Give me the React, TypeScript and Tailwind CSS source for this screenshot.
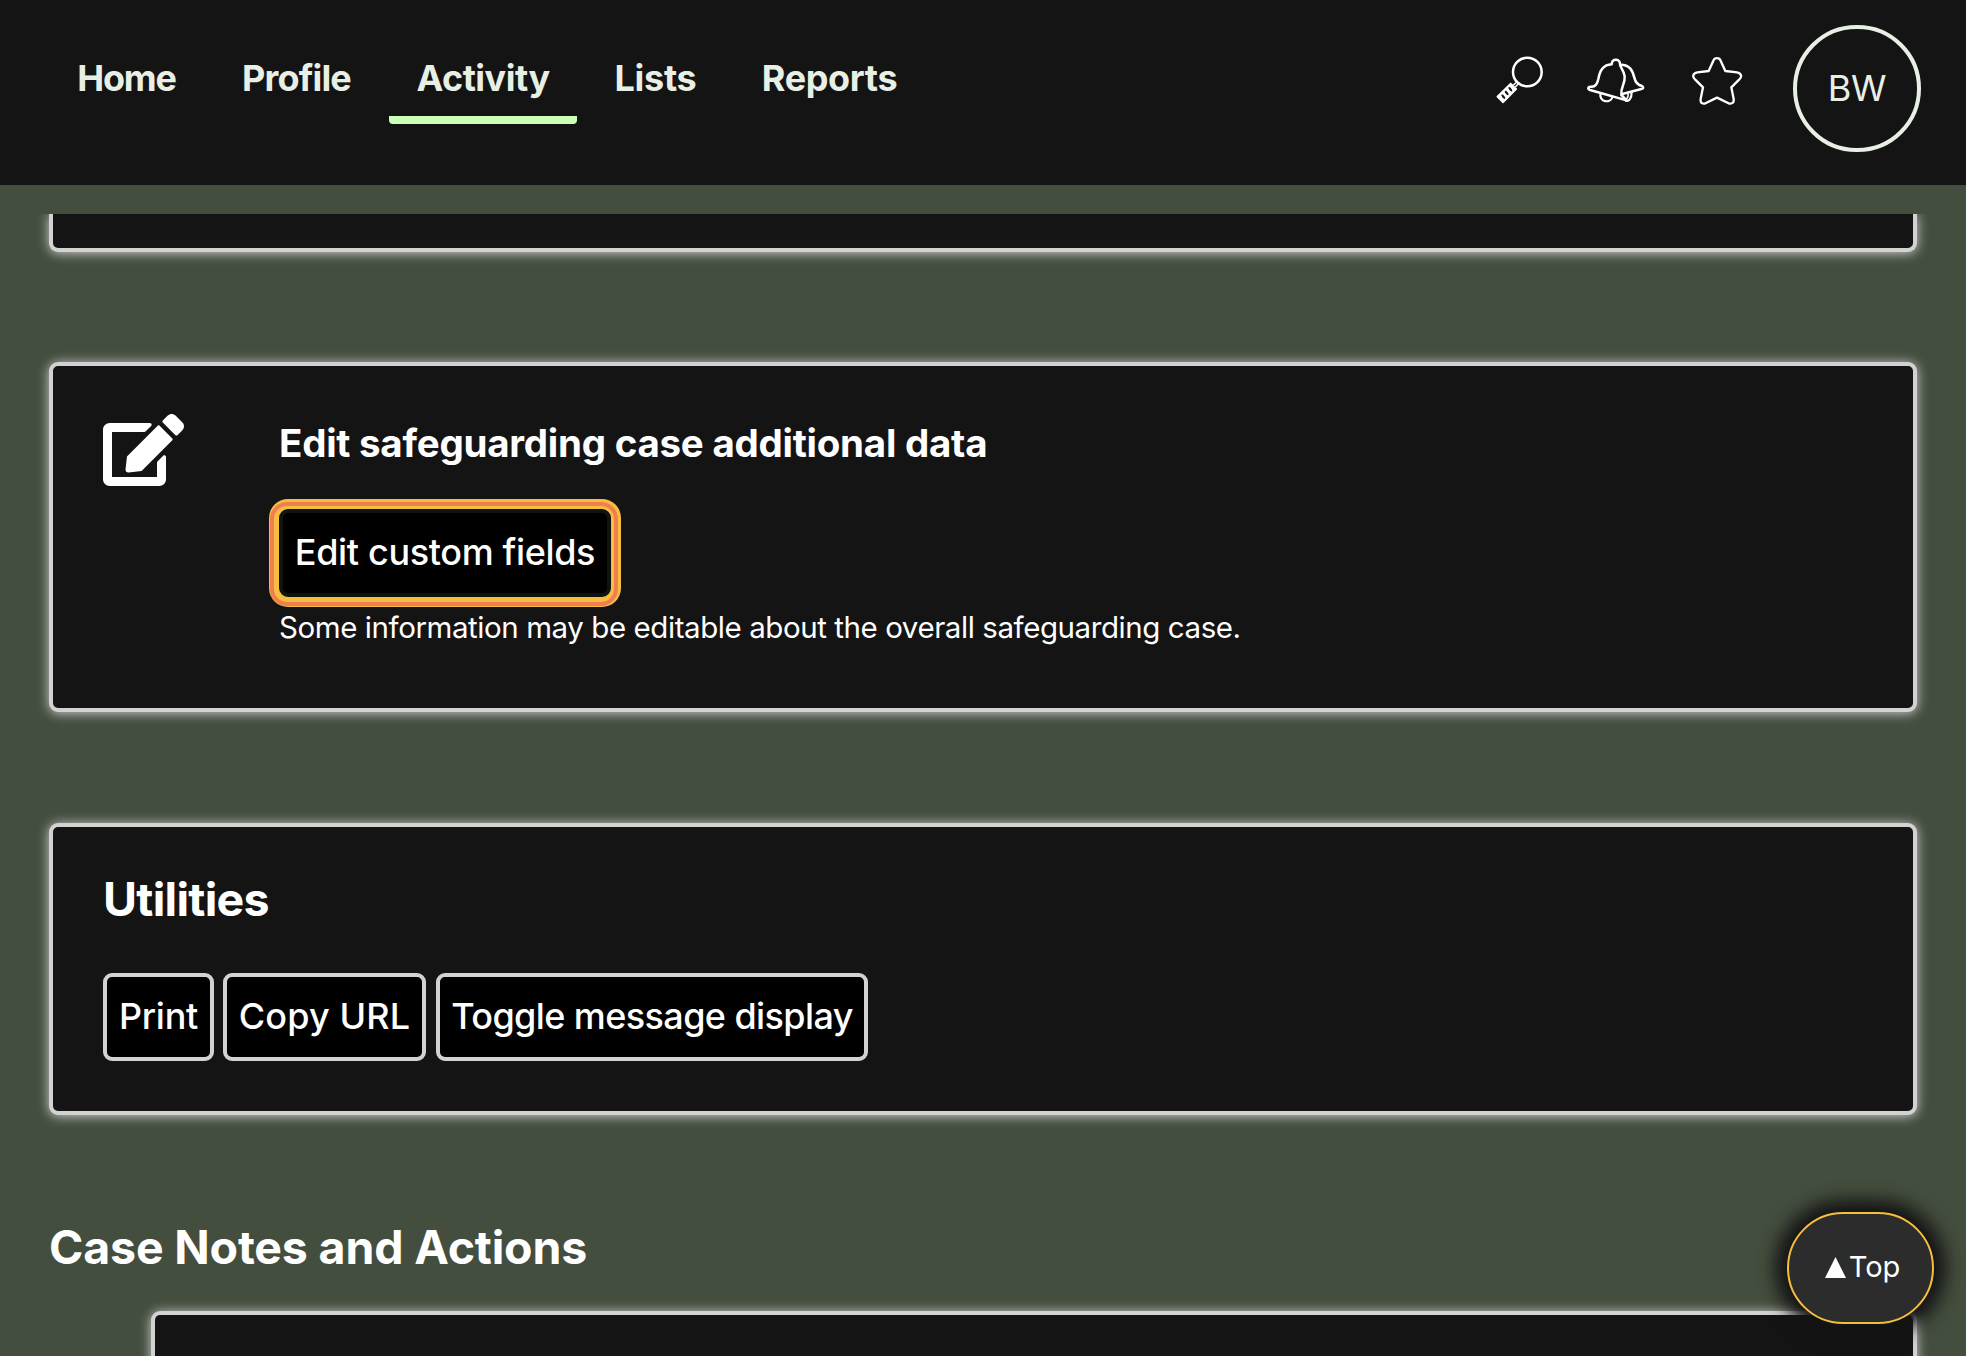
import { FaEdit } from "react-icons/fa";

const cardShadow = "shadow-[0_1px_12px_#d2d2d2]";

function SearchIcon() {
  return (
    <svg className="h-[48px] w-[48px] overflow-visible" viewBox="0 0 144 144" fill="none" stroke="#fff" strokeWidth="7.5">
      <circle cx="94" cy="48" r="43" />
      <path d="M62 78 52 88M67 83 58 93" strokeWidth="4.5" />
      <path d="M44 83 61 99 21 139 4 122Z" fill="#fff" strokeLinejoin="round" strokeWidth="5" />
      <g fill="#141414" stroke="none">
        <ellipse cx="22" cy="122" rx="8" ry="3.5" transform="rotate(50 22 122)" />
        <ellipse cx="32" cy="111" rx="8" ry="3.5" transform="rotate(50 32 111)" />
        <ellipse cx="43" cy="100" rx="8" ry="3.5" transform="rotate(50 43 100)" />
      </g>
    </svg>
  );
}

function BellsIcon() {
  return (
    <svg className="h-[48px] w-[60px] overflow-visible" viewBox="0 0 180 144" fill="none" stroke="#fff" strokeWidth="7.5" strokeLinejoin="round" strokeLinecap="round">
      <path d="M77 22C78 4 102 4 102 22C102 30 113 38 116 58C118 82 103 90 106 114L122 130L12 99C4 96 6 89 13 89C24 91 33 85 37 66C42 37 53 24 77 22Z" />
      <path d="M104 23C132 23 140 42 145 62C149 79 157 85 168 87C174 91 172 95 166 96L109 111" />
      <path d="M43 110C41 138 73 138 79 121M137 106C137 124 129 134 119 131" strokeWidth="6.5" />
      <path d="M126 109C128 119 124 124 119 127" strokeWidth="5" />
    </svg>
  );
}

function StarIcon() {
  return (
    <svg className="h-[50px] w-[52px]" viewBox="0 0 156 150" fill="none" stroke="#fff" strokeWidth="7" strokeLinejoin="round">
      <path d="M64 14C68 4 82 4 86 14L100 45L135 49C148 51 151 63 142 70L118 94L125 129C127 141 117 146 108 141L75 125L42 141C33 146 24 141 26 129L33 94L9 70C0 63 3 51 16 49L50 45Z" />
    </svg>
  );
}

function NavItem({ label, className, active }: { label: string; className: string; active?: boolean }) {
  return (
    <a
      className={`flex h-[66px] justify-center rounded-b-[4px] border-b-8 text-[36px] leading-[40px] font-bold whitespace-nowrap ${
        active ? "border-[#ccffb8]" : "border-transparent"
      } ${className}`}
    >
      {label}
    </a>
  );
}

function Button({ label, className }: { label: string; className: string }) {
  return (
    <button
      className={`flex h-[88px] items-center justify-center rounded-[9px] border-4 border-[#d2d2d2] bg-black pb-[2px] text-[36px] leading-[40px] font-medium whitespace-nowrap ${className}`}
    >
      {label}
    </button>
  );
}

export default function App() {
  return (
    <div className="relative flex h-[1356px] w-[1966px] flex-col overflow-hidden bg-[#444e3e] font-['Inter',sans-serif] text-white">
      <header className="flex h-[185px] shrink-0 justify-between bg-[#141414] pr-[45px] pl-[49px] text-[#e8efe4]">
        <nav className="flex gap-[11px] pt-[58px]">
          <NavItem label="Home" className="w-[157px] pr-[2px] tracking-[-1.2px]" />
          <NavItem label="Profile" className="w-[161px] pr-[2px] tracking-[-0.85px]" />
          <NavItem label="Activity" className="w-[188px] tracking-[-0.5px]" active />
          <NavItem label="Lists" className="w-[133px] pl-[2px] tracking-[-0.3px]" />
          <NavItem label="Reports" className="w-[195px] tracking-[-0.35px]" />
        </nav>
        <div className="flex">
          <div className="mt-[56px] mr-[42px]"><SearchIcon /></div>
          <div className="mt-[57px] mr-[46px]"><BellsIcon /></div>
          <div className="mt-[56px] mr-[49px]"><StarIcon /></div>
          <div className="mt-[25px] flex h-[127px] w-[128px] items-center justify-center rounded-full border-4 border-[#e8efe4] pb-[2px] text-[36px] tracking-[-0.3px]">
            BW
          </div>
        </div>
      </header>

      <main className="mt-[29px] flex flex-1 flex-col overflow-hidden pr-[49px] pl-[49px]">
        <section className={`h-[38px] shrink-0 rounded-b-[9px] border-4 border-t-0 border-[#d2d2d2] bg-[#141414] ${cardShadow}`} />

        <section className={`mt-[110px] flex h-[350px] shrink-0 rounded-[9px] border-4 border-[#d2d2d2] bg-[#141414] pl-[50px] ${cardShadow}`}>
          <FaEdit className="mt-[48px] h-[72px] w-[81px] shrink-0" />
          <div className="ml-[95px] flex flex-col items-start">
            <h2 className="mt-[53px] text-[38.5px] leading-[48px] font-bold tracking-[-0.25px] whitespace-nowrap">
              Edit safeguarding case additional data
            </h2>
            <button className="mt-[42px] flex h-[88px] w-[332px] items-center justify-center rounded-[9px] border-4 border-[#101411] bg-black pb-[2px] text-[36px] leading-[40px] font-medium tracking-[-0.35px] whitespace-nowrap shadow-[-1px_1px_0_4px_#f6be3f,-1px_1px_0_8px_#f27d50,0_0_0_10px_#f6be3f]">
              Edit custom fields
            </button>
            <p className="mt-[10px] text-[29.5px] leading-[40px] tracking-[-0.43px] whitespace-nowrap">
              Some information may be editable about the overall safeguarding case.
            </p>
          </div>
        </section>

        <section className={`mt-[111px] flex h-[292px] shrink-0 flex-col rounded-[9px] border-4 border-[#d2d2d2] bg-[#141414] pl-[50px] ${cardShadow}`}>
          <h2 className="mt-[42px] text-[46.5px] leading-[60px] font-bold tracking-[-0.7px]">Utilities</h2>
          <div className="mt-[44px] flex">
            <Button label="Print" className="w-[111px] tracking-[-0.25px]" />
            <Button label="Copy URL" className="ml-[9px] w-[203px] tracking-[0.15px]" />
            <Button label="Toggle message display" className="ml-[10px] w-[432px] tracking-[-0.6px]" />
          </div>
        </section>

        <h2 className="mt-[102px] shrink-0 text-[46.5px] leading-[60px] font-bold tracking-[-0.17px]">Case Notes and Actions</h2>
        <section className={`mt-[34px] ml-[102px] h-[120px] shrink-0 rounded-t-[9px] border-4 border-b-0 border-[#d2d2d2] bg-[#141414] ${cardShadow}`} />
      </main>

      <a className="absolute top-[1212px] left-[1787px] flex h-[112px] w-[147px] items-center justify-center rounded-[56px] border-2 border-[#f6be3f] bg-[#2c2c2c] pb-[2px] pl-[4px] text-[29px] shadow-[0_0_18px_12px_#141414]">
        <svg className="mr-[3px] h-[21px] w-[21px]" viewBox="0 0 21 21" fill="#fff"><path d="M10.5 0 21 21H0Z" /></svg>
        <span>Top</span>
      </a>
    </div>
  );
}
